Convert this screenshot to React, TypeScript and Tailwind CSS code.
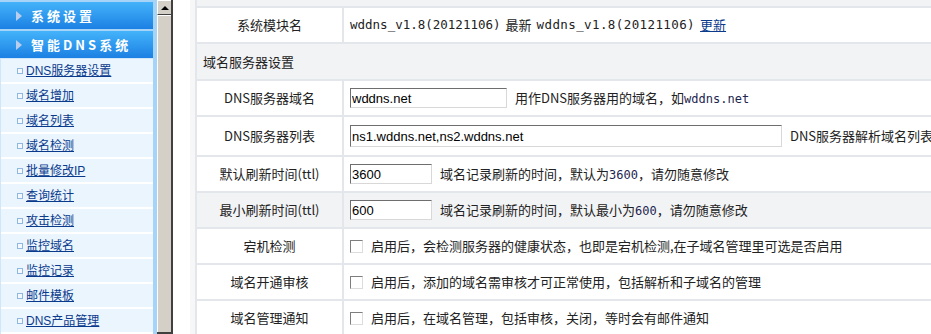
import React from 'react';

const menu = [
  'DNS服务器设置',
  '域名增加',
  '域名列表',
  '域名检测',
  '批量修改IP',
  '查询统计',
  '攻击检测',
  '监控域名',
  '监控记录',
  '邮件模板',
  'DNS产品管理',
];

function SideHeader({ title }: { title: string }) {
  return (
    <div className="h-[27px] flex items-center bg-linear-to-b from-[#44b3fa] to-[#1b80e3]">
      <span className="ml-[16px] w-0 h-0 border-y-[5px] border-y-transparent border-l-[6px] border-l-[#b9cdec]" />
      <span className="ml-[9px] text-white font-bold text-[13px] tracking-[3px]">{title}</span>
    </div>
  );
}

function Scrollbar() {
  return (
    <div className="w-[16px] h-[334px] flex flex-col bg-[#d4d0c8] border-r-2 border-r-[#404040] border-b-2 border-b-[#404040]">
      <div className="h-[15px] flex items-center justify-center border-l border-t border-white border-b border-b-[#404040]">
        <span className="w-0 h-0 border-x-[4px] border-x-transparent border-b-[4px] border-b-black" />
      </div>
      <div className="flex-1 border-l border-t border-white" />
    </div>
  );
}

function Check() {
  return (
    <span className="inline-block w-[13px] h-[13px] bg-white border border-t-[#7e7e7e] border-l-[#7e7e7e] border-r-[#dcdcdc] border-b-[#dcdcdc] shrink-0" />
  );
}

function Field({ value, w, h = 'h-[20px]' }: { value: string; w: string; h?: string }) {
  return (
    <input
      readOnly
      defaultValue={value}
      className={`${w} ${h} shrink-0 bg-white px-[1px] text-[13px] text-black font-[family-name:'Liberation_Sans',sans-serif] border border-t-[#6e6e6e] border-l-[#6e6e6e] border-r-[#d8d8d8] border-b-[#d8d8d8] outline-none`}
    />
  );
}

function Row({
  label,
  children,
  gray = false,
  h = 'h-[36px]',
}: {
  label: string;
  children: React.ReactNode;
  gray?: boolean;
  h?: string;
}) {
  return (
    <div className={`${h} flex border-b-2 border-[#e3e6eb] ${gray ? 'bg-[#f2f3f5]' : 'bg-white'}`}>
      <div className="w-[147px] shrink-0 flex items-center justify-center border-r-2 border-[#e3e6eb]">{label}</div>
      <div className="flex-1 flex items-center gap-[8px] pl-[6px] whitespace-nowrap overflow-hidden">{children}</div>
    </div>
  );
}

const mono = "font-[family-name:'DejaVu_Sans_Mono',monospace] text-[#1c2550]";

export default function App() {
  return (
    <div className="w-[931px] h-[334px] overflow-hidden flex bg-white text-[#222] font-[family-name:'Noto_Sans_CJK_SC',sans-serif]">
      <div className="w-[157px] shrink-0 h-[334px] bg-[#a6d4f8] pt-[2px] pr-[4px] flex flex-col gap-[2px]">
        <SideHeader title="系统设置" />
        <div className="flex flex-col">
          <SideHeader title="智能DNS系统" />
          <div className="pt-[1px] pl-[1px] bg-[#cfe6fb]">
            {menu.map((m) => (
              <div key={m} className="h-[25px] flex items-center bg-[#ebf5fe] border-b-2 border-white">
                <span className="ml-[16px] w-[6px] h-[6px] border border-[#8fb7e0] bg-[#f4f9ff]" />
                <a
                  href="#"
                  className="ml-[3px] text-[12px] text-[#0a3a8c] underline font-[family-name:'Liberation_Sans','Noto_Sans_CJK_SC',sans-serif]"
                >
                  {m}
                </a>
              </div>
            ))}
          </div>
        </div>
      </div>
      <Scrollbar />
      <div className="w-[17px] shrink-0" />
      <div className="flex-1 h-[334px] overflow-hidden bg-[#f7f7f8] pl-[5px] text-[13px]">
        <div className="border-l-2 border-[#e3e6eb]">
          <div className="h-[8px] bg-[#f2f3f5] border-b-2 border-[#e3e6eb]" />
          <Row label="系统模块名">
            <span className="flex items-center">
              <span className={`${mono} text-[12.5px] text-[#222]`}>wddns_v1.8(20121106)</span>
              <span className="mx-[5px]">最新</span>
              <span className={`${mono} text-[12.5px] text-[#222] tracking-[0.4px]`}>wddns_v1.8(20121106)</span>
              <a href="#" className="ml-[5px] text-[#0a3a8c] underline">
                更新
              </a>
            </span>
          </Row>
          <div className="h-[37px] flex items-center pl-[6px] bg-[#f2f3f5] border-b-2 border-[#e3e6eb]">域名服务器设置</div>
          <Row label="DNS服务器域名">
            <Field value="wddns.net" w="w-[157px]" />
            <span>
              用作DNS服务器用的域名，如<span className={`${mono} text-[12px]`}>wddns.net</span>
            </span>
          </Row>
          <Row label="DNS服务器列表" h="h-[40px]">
            <Field value="ns1.wddns.net,ns2.wddns.net" w="w-[432px]" h="h-[22px]" />
            <span>DNS服务器解析域名列表</span>
          </Row>
          <Row label="默认刷新时间(ttl)">
            <Field value="3600" w="w-[82px]" />
            <span>
              域名记录刷新的时间，默认为<span className={`${mono} text-[12px]`}>3600</span>，请勿随意修改
            </span>
          </Row>
          <Row label="最小刷新时间(ttl)" gray>
            <Field value="600" w="w-[82px]" />
            <span>
              域名记录刷新的时间，默认最小为<span className={`${mono} text-[12px]`}>600</span>，请勿随意修改
            </span>
          </Row>
          <Row label="宕机检测">
            <Check />
            <span>启用后，会检测服务器的健康状态，也即是宕机检测,在子域名管理里可选是否启用</span>
          </Row>
          <Row label="域名开通审核">
            <Check />
            <span>启用后，添加的域名需审核才可正常使用，包括解析和子域名的管理</span>
          </Row>
          <Row label="域名管理通知">
            <Check />
            <span>启用后，在域名管理，包括审核，关闭，等时会有邮件通知</span>
          </Row>
        </div>
      </div>
    </div>
  );
}
